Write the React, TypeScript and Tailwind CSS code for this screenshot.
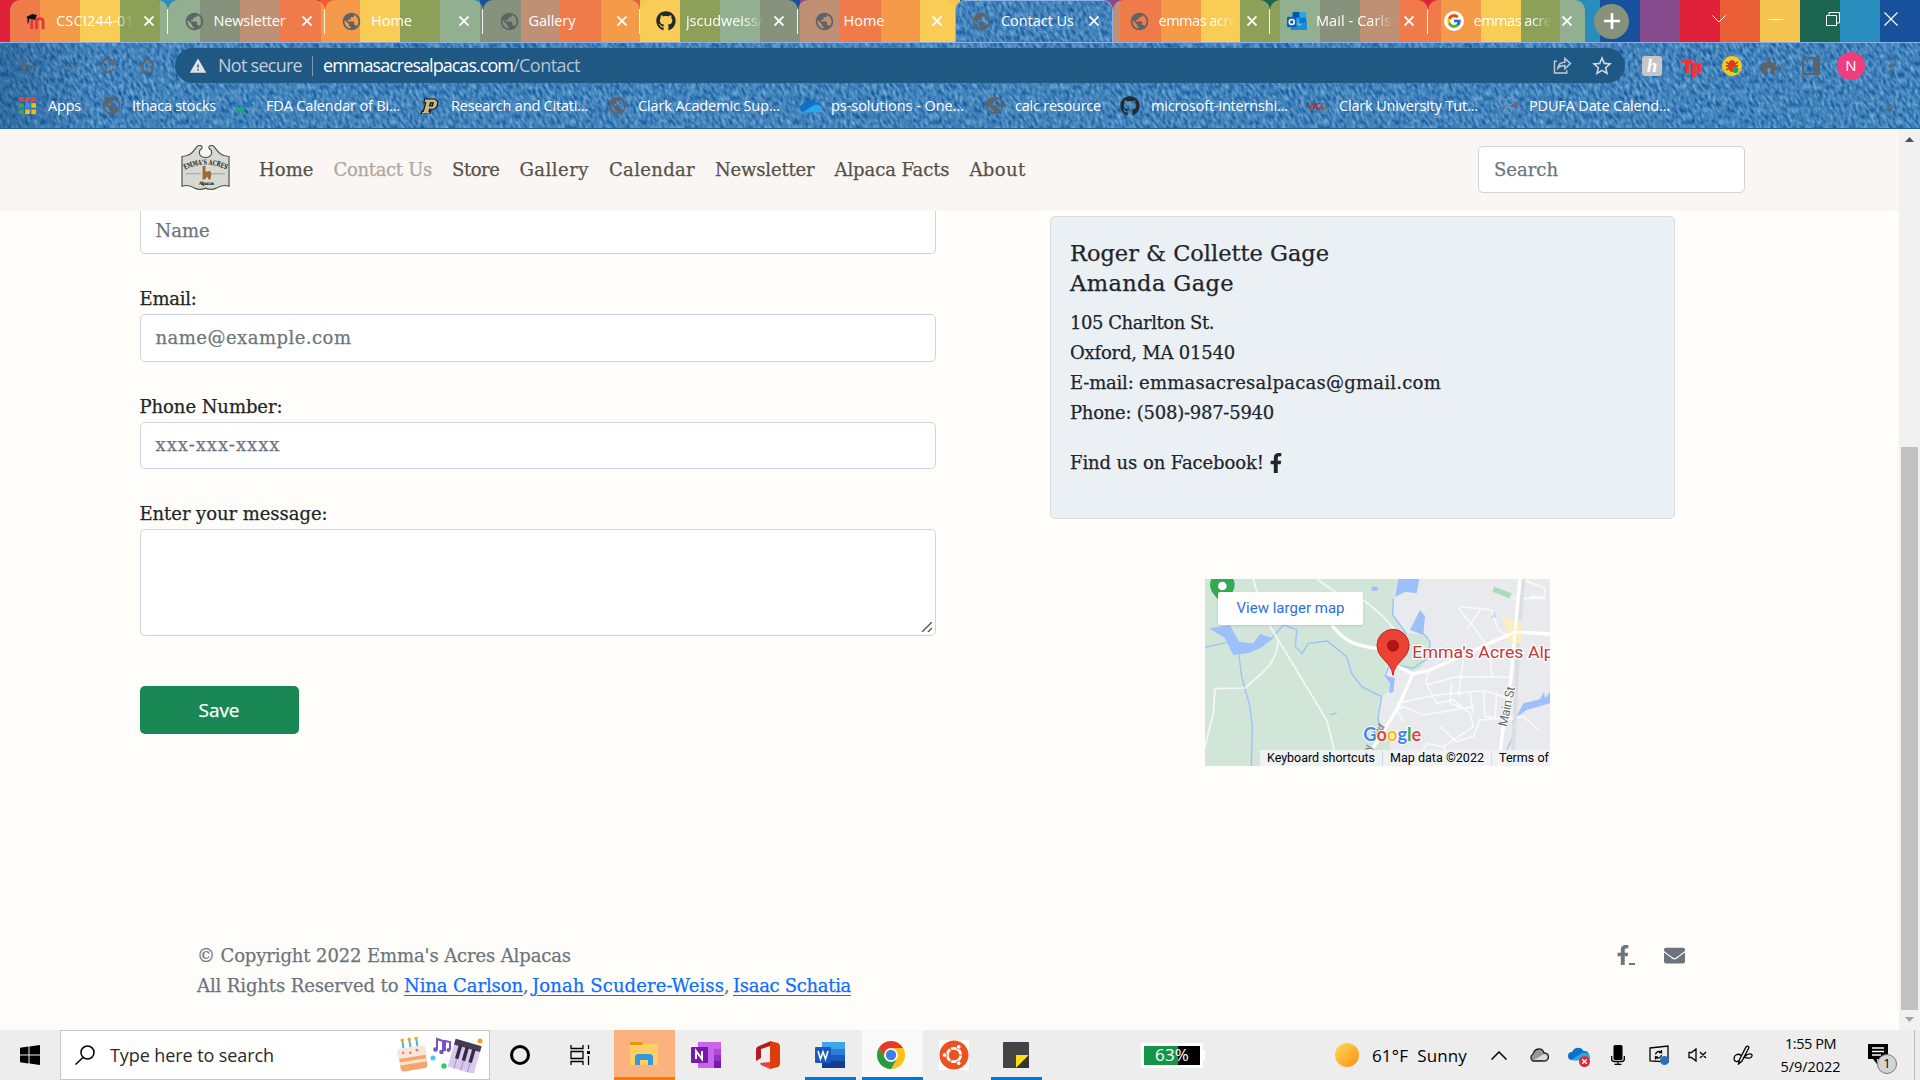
import { useLayoutEffect, useRef, useState, type ReactNode } from "react";
import { FaFacebookF, FaEnvelope, FaGithub, FaPuzzlePiece, FaUbuntu } from "react-icons/fa";
import { MdPublic, MdWarning, MdStarOutline } from "react-icons/md";
import { FcGoogle } from "react-icons/fc";

/* Text whose tracking is adjusted so that it spans the given width. */
function Fit({ w, children, className = "" }: { w: number; children: string; className?: string }) {
  const ref = useRef<HTMLSpanElement>(null);
  const [ls, setLs] = useState(0);
  useLayoutEffect(() => {
    const el = ref.current;
    if (el) setLs((w - el.getBoundingClientRect().width) / children.length);
  }, [w, children]);
  return (
    <span ref={ref} className={`inline-block whitespace-pre ${className}`} style={{ letterSpacing: `${ls}px` }}>
      {children}
    </span>
  );
}

const Globe = () => <MdPublic className="size-[21px] text-[#5f6368]" />;

const Outlook = () => (
  <svg viewBox="0 0 22 22" className="size-[21px]">
    <rect x="7" y="1" width="14" height="12" fill="#28a8ea" />
    <rect x="7" y="1" width="7" height="6" fill="#0358a7" />
    <rect x="14" y="7" width="7" height="6" fill="#0078d4" />
    <path d="M5 10l9 6 8-6v10H5z" fill="#1490df" />
    <rect x="1" y="6" width="10" height="11" rx="1" fill="#0f5fb3" />
    <circle cx="6" cy="11.5" r="2.6" fill="none" stroke="#fff" strokeWidth="1.6" />
  </svg>
);

const Moodle = () => (
  <svg viewBox="0 0 20 18" className="h-[17px] w-5">
    <path d="M4 17V9c0-4 5-4 5 0v8M9 17V9c0-4 7-4 7 0v8" transform="translate(1.5 0)" fill="none" stroke="#e5343d" strokeWidth="3" />
    <path d="M0 4L6 1l5 1-2 5-6-1-1 5H1V6z" fill="#111" />
  </svg>
);

type TabData = { title: string; w: number; icon: ReactNode; active?: boolean; fade?: boolean; sep?: boolean };
const tabs: TabData[] = [
  { title: "CSCI244-01", w: 78, icon: <Moodle />, fade: true, sep: true },
  { title: "Newsletter", w: 72, icon: <Globe />, sep: true },
  { title: "Home", w: 41, icon: <Globe />, sep: true },
  { title: "Gallery", w: 47, icon: <Globe />, sep: true },
  { title: "jscudweiss/", w: 77, icon: <FaGithub className="size-[20px] text-[#24292e]" />, fade: true, sep: true },
  { title: "Home", w: 41, icon: <Globe /> },
  { title: "Contact Us", w: 73, icon: <Globe />, active: true },
  { title: "emmas acre", w: 78, icon: <Globe />, fade: true, sep: true },
  { title: "Mail - Carlso", w: 84, icon: <Outlook />, fade: true, sep: true },
  { title: "emmas acre", w: 78, icon: <span className="flex size-5 items-center justify-center rounded-full bg-white"><FcGoogle className="size-4" /></span>, fade: true },
];

const frameStripes =
  "bg-fixed bg-[repeating-linear-gradient(90deg,#df2239_0_40px,#ea5e35_40px_80px,#f5c451_80px_120px,#1c6650_120px_160px,#288cbc_160px_200px,#17509b_200px_240px,#864b8c_240px_280px)]";
const tabStripes =
  "bg-fixed bg-[repeating-linear-gradient(90deg,#ef7b4b_0_40px,#f49a49_40px_80px,#f8cc55_80px_120px,#8ca058_120px_160px,#92af8f_160px_200px,#87927c_200px_240px,#bf9073_240px_280px)]";

function Denim({ id, className }: { id: string; className: string }) {
  return (
    <svg className={className} preserveAspectRatio="none">
      <filter id={id} x="0" y="0" width="100%" height="100%" colorInterpolationFilters="sRGB">
        <feTurbulence type="fractalNoise" baseFrequency="0.34 0.17" numOctaves="2" seed="7" />
        <feColorMatrix values="0.62 0 0 0 -0.05  0.56 0 0 0 0.23  0.38 0 0 0 0.54  0 0 0 0 1" />
      </filter>
      <g transform="skewX(18)">
        <rect x="-60" width="2100" height="140" filter={`url(#${id})`} />
      </g>
    </svg>
  );
}

const X = () => (
  <svg viewBox="0 0 10 10" className="size-[10px]" stroke="#fff" strokeWidth="1.9"><path d="M.5.5l9 9M9.5.5l-9 9" /></svg>
);

function Tab({ t }: { t: TabData }) {
  return (
    <div className={`relative flex h-[42px] w-[157.5px] shrink-0 items-center overflow-hidden rounded-t-[10px] ${t.active ? "border-x border-t border-[#8fb0e6] bg-[#3c7fbc] pb-px pl-[15px]" : `pl-4 ${tabStripes}`}`}>
      {t.active && <Denim id="denim-tab" className="absolute inset-0 h-full w-full" />}
      <span className="relative flex w-[30px] items-center">{t.icon}</span>
      <span className={`relative w-[83px] overflow-hidden text-[14.5px] leading-[20px] text-white ${t.fade ? "[mask-image:linear-gradient(90deg,#000_58px,transparent_78px)]" : ""}`}>
        <Fit w={t.w}>{t.title}</Fit>
      </span>
      <span className="relative ml-[5px]"><X /></span>
      {t.sep && <span className="absolute right-0 top-[9px] h-[25px] w-px bg-white/90" />}
    </div>
  );
}

function TabStrip() {
  return (
    <div className={`flex h-[42px] items-center pl-[10px] ${frameStripes}`}>
      {tabs.map((t, i) => <Tab key={i} t={t} />)}
      <div className="ml-[9px] flex size-[35px] items-center justify-center rounded-full bg-[#87927c]">
        <svg viewBox="0 0 16 16" className="size-4" stroke="#fff" strokeWidth="2.6"><path d="M8 0v16M0 8h16" /></svg>
      </div>
      <div className="ml-auto mb-1 flex items-center pr-[22px] text-white">
        <svg viewBox="0 0 14 8" className="h-2 w-[14px]" fill="none" stroke="currentColor"><path d="M.5.5L7 7 13.5.5" /></svg>
        <span className="ml-[43px] h-px w-[14px] bg-white" />
        <svg viewBox="0 0 14 14" className="ml-[43px] size-[14px]" fill="none" stroke="currentColor"><path d="M.5 3.5h10v10H.5zM3 3.500V.5h10.500v10.500H11" /></svg>
        <svg viewBox="0 0 14 14" className="ml-[44px] size-[14px]" fill="none" stroke="currentColor" strokeWidth="1.2"><path d="M.5.5l13 13M13.500.5l-13 13" /></svg>
      </div>
    </div>
  );
}

function Toolbar() {
  return (
    <div className="flex h-[45px] items-center text-[#5f6368]">
      <svg viewBox="0 0 20 16" className="ml-[19px] h-4 w-[18px]" fill="none" stroke="currentColor" strokeWidth="2"><path d="M19 8H2M9 1L2 8l7 7" /></svg>
      <svg viewBox="0 0 20 16" className="ml-[22px] h-4 w-[18px] opacity-40" fill="none" stroke="currentColor" strokeWidth="2"><path d="M1 8h17M11 1l7 7-7 7" /></svg>
      <svg viewBox="0 0 18 18" className="ml-[22px] size-[17px]" fill="none" stroke="currentColor" strokeWidth="2"><path d="M15.500 12A7 7 0 1 1 15 5M16.500 1v6h-6" /></svg>
      <svg viewBox="0 0 16 18" className="ml-[23px] h-[17px] w-[17px]" fill="none" stroke="currentColor" strokeWidth="2"><path d="M1 9l7-7.500L15 9M3 8v8.500h10V8" /></svg>
      <div className="ml-[19px] flex h-[35px] w-[1450px] items-center rounded-full bg-[#205884] pl-[14px] text-[18px]">
        <MdWarning className="size-[18px] text-[#dfe3e8]" />
        <span className="ml-[11px] text-[#c3cdd8]"><Fit w={84}>Not secure</Fit></span>
        <span className="mx-[10px] h-5 w-px bg-[#8499ad]" />
        <span className="text-white"><Fit w={190}>emmasacresalpacas.com</Fit></span>
        <span className="text-[#b5c4d3]"><Fit w={67}>/Contact</Fit></span>
        <svg viewBox="0 0 20 18" className="ml-auto h-[17px] w-[19px]" fill="none" stroke="#c3cdd8" strokeWidth="1.500"><path d="M4 4.500H1.500v12.500h13V14M5 12c.5-4 3-6.500 7.500-6.500V1.500L18.500 7l-6 5.500V9C9 9 7 9.500 5 12z" /></svg>
        <MdStarOutline className="ml-[18px] mr-[11px] size-[24px] text-[#d0d8e0]" />
      </div>
      <span className="ml-[17px] flex size-[20px] items-center justify-center rounded-[3px] bg-[#c4c6c8] font-['Liberation_Serif',serif] text-[19px] font-bold italic leading-none text-white">h</span>
      <span className="ml-[20px] w-[22px] text-[18px] font-extrabold leading-5 tracking-[-2px] text-[#ee3338] [-webkit-text-stroke:1px_#ee3338]">Tp</span>
      <svg viewBox="0 0 20 20" className="ml-[18px] size-[20px]"><circle cx="10" cy="10" r="10" fill="#fbc81c" /><path d="M4 6l12 8M16 6L4 14M4 10h12" stroke="#8a3a13" strokeWidth="1.300" /><ellipse cx="10" cy="10" rx="4" ry="6" fill="#db3b26" /><circle cx="13.500" cy="14" r="3" fill="#12a87a" /></svg>
      <FaPuzzlePiece className="ml-[20px] size-[19px]" />
      <svg viewBox="0 0 18 18" className="ml-[21px] size-[18px]"><path d="M1 1h16v16H1z" fill="none" stroke="currentColor" strokeWidth="2" /><path d="M11 1h6v16h-6z" fill="currentColor" /></svg>
      <span className="ml-[17px] flex size-[28px] items-center justify-center rounded-full bg-[#ee3e7b] text-[15px] text-white">N</span>
      <svg viewBox="0 0 4 18" className="ml-[24px] h-[17px] w-1" fill="currentColor"><circle cx="2" cy="2" r="2" /><circle cx="2" cy="9" r="2" /><circle cx="2" cy="16" r="2" /></svg>
    </div>
  );
}

const OneDrive = () => (
  <svg viewBox="0 0 22 14" className="h-[14px] w-[22px]"><path d="M4 13a4 4 0 0 1 0-8C6 0 13-1 15.500 4a4.500 4.500 0 0 1 2 9z" fill="#0f6fc9" /><path d="M3 13L14 6c4-1 8 1 8 4s-2 3.500-4 3.500H5z" fill="#28a8ea" /></svg>
);
const dotColors = ["fill-[#ea4335]", "fill-[#ea4335]", "fill-[#ea4335]", "fill-[#34a853]", "fill-[#4285f4]", "fill-[#fbbc04]", "fill-[#34a853]", "fill-[#fbbc04]", "fill-[#fbbc04]"];
const bookmarks: { t: string; w: number; icon: ReactNode; slot: string }[] = [
  { t: "Apps", w: 33, slot: "w-[82px]", icon: <svg viewBox="0 0 17 17" className="size-[17px]">{dotColors.map((c, i) => <rect key={i} x={(i % 3) * 6.200} y={Math.floor(i / 3) * 6.200} width="4.600" height="4.600" className={c} />)}</svg> },
  { t: "Ithaca stocks", w: 84, slot: "w-[134px]", icon: <Globe /> },
  { t: "FDA Calendar of Bi...", w: 134, slot: "w-[185px]", icon: <svg viewBox="0 0 20 20" className="size-5" fill="none" strokeWidth="3"><path d="M1 16c4-6 6-1 9-6" stroke="#19a974" /><path d="M8 11c2-5 6-2 10-8" stroke="#2376c4" /><path d="M6 14l3 3" stroke="#19a974" /></svg> },
  { t: "Research and Citati...", w: 137, slot: "w-[187px]", icon: <svg viewBox="0 0 20 17" className="h-4 w-[19px]"><path d="M5 1h11l3 3-1 5-3 3H10l-.5 2H11l-1 3H1l1-3h1.500L6 5H4zM11 5l-.8 3.500h3L14 5z" fill="#cfb87c" fillRule="evenodd" stroke="#111" strokeWidth="1.200" /></svg> },
  { t: "Clark Academic Sup...", w: 142, slot: "w-[193px]", icon: <Globe /> },
  { t: "ps-solutions - One...", w: 133, slot: "w-[184px]", icon: <OneDrive /> },
  { t: "calc resource", w: 86, slot: "w-[136px]", icon: <Globe /> },
  { t: "microsoft-internshi...", w: 137, slot: "w-[188px]", icon: <FaGithub className="size-5 text-[#24292e]" /> },
  { t: "Clark University Tut...", w: 139, slot: "w-[190px]", icon: <span className="text-[9px] font-bold tracking-[-1px] text-[#c22434]">WC<span className="text-[#666]">O</span></span> },
  { t: "PDUFA Date Calend...", w: 141, slot: "w-[190px]", icon: <svg viewBox="0 0 20 20" className="size-5" fill="none" stroke="#7197c4" strokeWidth="1.300"><circle cx="5" cy="6" r="3.500" /><circle cx="12" cy="5" r="3.500" /><circle cx="10" cy="14" r="3.500" /><circle cx="17" cy="9" r="1.200" stroke="#c44" /></svg> },
];

function Bookmarks() {
  return (
    <div className="flex h-[40px] items-center pl-[19px] pb-[5px] text-[14.5px] leading-5 text-white">
      {bookmarks.map((b) => (
        <div key={b.t} className={`flex shrink-0 items-center ${b.slot}`}>
          <span className={`flex shrink-0 items-center ${b.t === "Apps" ? "w-[29px]" : "w-[31px]"}`}>{b.icon}</span>
          <Fit w={b.w}>{b.t}</Fit>
        </div>
      ))}
      <span className="ml-auto mr-[26px] text-[17px] text-[#5f6368]">»</span>
    </div>
  );
}

function Logo() {
  return (
    <svg viewBox="0 0 50 48" className="-mt-[3px] h-[46px] w-[49px]" preserveAspectRatio="none">
      <path d="M1 12c9 0 12-6 15-10 3-3 7-1 5 2-3 1-4 9 4 9s7-8 4-9c-2-3 2-5 5-2 3 4 6 10 15 10v31c-6-2-10 0-13 2-4 2-7 2-11 0-4 2-7 2-11 0-3-2-7-4-13-2z" fill="#d8d9d0" stroke="#4c554c" strokeWidth="1.200" />
      <path id="logo-arc" d="M4 26Q25 15 47 26" fill="none" />
      <text fontSize="7.500" fontWeight="700" fontFamily="DejaVu Serif, serif" fill="#222"><textPath href="#logo-arc" textLength="44" lengthAdjust="spacingAndGlyphs">EMMA'S ACRES</textPath></text>
      <path d="M5 30h15M31 30h14" stroke="#8b908b" strokeWidth=".8" />
      <path d="M22 22h3v6l5-1 1 4-1 5h-2l-1-3-3 3h-2v-7z" fill="#9b6b35" />
      <text x="18" y="42" fontSize="5" fontWeight="700" textLength="16" fontFamily="DejaVu Serif, serif" fill="#222">Alpacas</text>
    </svg>
  );
}

const nav: [string, number][] = [["Home", 54.5], ["Contact Us", 98.5], ["Store", 47.5], ["Gallery", 69.5], ["Calendar", 86], ["Newsletter", 99.5], ["Alpaca Facts", 115], ["About", 56]];

function NavBar() {
  return (
    <nav className="flex h-[82px] shrink-0 items-center bg-[#faf6f4] pb-px pl-[181px] text-[18px]">
      <Logo />
      <div className="ml-[29px] flex gap-5">
        {nav.map(([t, w]) => (
          <a key={t} className={t === "Contact Us" ? "text-[#aea69c]" : "text-[#565049]"}><Fit w={w}>{t}</Fit></a>
        ))}
      </div>
      <div className="ml-auto mr-[154px] flex h-[47px] w-[267px] items-center rounded-[5px] border border-[#ced4da] bg-white pl-[15px] text-[#6c757d]"><Fit w={64}>Search</Fit></div>
    </nav>
  );
}

function Field({ label, lw, ph, pw }: { label: string; lw: number; ph: string; pw: number }) {
  return (
    <div className="mt-[30px]">
      <div className="flex h-[30px] items-center leading-[30px]"><Fit w={lw}>{label}</Fit></div>
      <div className="flex h-[47.500px] items-center rounded-[5px] border border-[#ced4da] bg-white pb-px pl-[15px] text-[#6c757d]"><Fit w={pw}>{ph}</Fit></div>
    </div>
  );
}

function ContactForm() {
  return (
    <form className="w-[796px] text-[18px] text-[#212529]">
      <div className="flex h-[43px] items-center rounded-b-[5px] border border-t-0 border-[#ced4da] bg-white pb-[4px] pl-[15px] text-[#6c757d]"><Fit w={54}>Name</Fit></div>
      <Field label="Email:" lw={57} ph="name@example.com" pw={196} />
      <Field label="Phone Number:" lw={143} ph="xxx-xxx-xxxx" pw={125} />
      <div className="mt-[30px] flex h-[30px] items-center leading-[30px]"><Fit w={188}>Enter your message:</Fit></div>
      <div className="flex h-[107px] items-end justify-end rounded-[5px] border border-[#ced4da] bg-white p-[3px]">
        <svg viewBox="0 0 10 10" className="size-[10px]" stroke="#555" strokeWidth="1.400"><path d="M0 10L10 0M6 10l4-4" /></svg>
      </div>
      <button type="button" className="mt-[50px] flex h-[48px] w-[159px] items-center justify-center rounded-[5px] bg-[#198754] font-['Open_Sans',sans-serif] text-[19px] text-white"><Fit w={41}>Save</Fit></button>
    </form>
  );
}

function ContactCard() {
  return (
    <section className="h-[303px] w-[625px] rounded-[5px] border border-[#d9dde0] bg-[#ebf0f5] px-[19px] pt-[21px] text-[18px] leading-[30px] text-[#212529]">
      <h5 className="text-[22.5px] leading-[30px]"><Fit w={259}>Roger & Collette Gage</Fit><br /><Fit w={164}>Amanda Gage</Fit></h5>
      <p className="mt-[10px]">
        <Fit w={144}>105 Charlton St.</Fit><br />
        <Fit w={165}>Oxford, MA 01540</Fit><br />
        <Fit w={69}>E-mail: </Fit><Fit w={302}>emmasacresalpacas@gmail.com</Fit><br />
        <Fit w={204}>Phone: (508)-987-5940</Fit>
      </p>
      <p className="mt-5 flex items-center"><Fit w={194}>Find us on Facebook!</Fit><FaFacebookF className="ml-[2px] size-[20px]" /></p>
    </section>
  );
}

function MapEmbed() {
  return (
    <div className="relative mt-[60px] ml-[155px] h-[187px] w-[345px] overflow-hidden bg-[#e8eaed] font-[Roboto,sans-serif] [-webkit-text-stroke:0]">
      <svg viewBox="45 57 1035 561" className="h-full w-full" fill="none">
        <path d="M45 57H625L607 130 612 175 648 220 715 225 720 290 690 325 660 335 640 330 590 315 588 345 605 385 570 415 565 470 600 545 600 618H45z" fill="#d1e6d9" />
        <g fill="#9dc0fb">
          <path d="M58 205L120 196 147 245 190 250 210 222 250 235 215 262 180 278 130 286 105 235z" />
          <path d="M615 112L625 57H688L680 100 645 95zM660 210L690 150 705 168 700 225zM545 80h18v12h-18zM905 172L912 155 918 173zM582 345L615 355 610 395 598 400 600 370zM978 472L1000 430 1050 418 1062 395 1065 415 1080 395V430L1010 450z" />
        </g>
        <g stroke="#9dc0fb" strokeWidth="4">
          <path d="M45 262L125 244M147 285L155 350 180 440 187 500 184 618M245 235L280 195 320 210 316 260 336 280 355 250 412 243 470 290 485 340 515 380 575 410M610 115L608 165 650 222M700 220L720 245 718 290 670 325 600 310 585 350M575 410L563 480 600 545M968 480L975 520 950 570 955 618M420 464l20-5" />
        </g>
        <g stroke="#fff" strokeWidth="5" opacity=".75">
          <path d="M190 57L205 110 235 190 265 240 410 480 445 618M380 57L470 120 525 123 575 165 620 215M265 240C260 320 200 350 165 384L75 386 70 460 45 560" />
          <path d="M715 330L708 370 740 430 790 420 840 460 850 500M708 375L800 350 960 352M620 430L740 405 880 392 960 415M640 485L620 450 640 440 700 465 850 440M880 390L885 470 980 480M785 370L780 430 830 450M920 395L915 480M750 500L800 545 850 530 870 480 1000 470 1045 510M690 590L710 550 760 560 800 618M805 145L850 200 900 270 905 350M810 140L905 150 925 210 960 235M830 210L870 150M850 500L760 560 770 590M820 300L805 410M840 395L850 460M1000 60L1065 85 1062 112 1020 110M970 115H1065" />
        </g>
        <path d="M1000 57L985 225 975 470 965 618" stroke="#dcdee2" strokeWidth="12" />
        <g stroke="#fff" strokeWidth="10">
          <path d="M425 195C465 245 490 255 560 265L625 320 668 342 720 330 975 216 1080 222M668 342L625 440 540 580 520 618" />
          <path d="M990 57L975 216 962 360 940 500 925 618" />
        </g>
        <path d="M935 170L995 185V250L950 252 955 220z" fill="#fceebf" />
        <path d="M990 57L975 216 962 360M900 248L975 216 1080 222" stroke="#fff" strokeWidth="8" />
        <path d="M912 80L965 100 958 115 908 95z" fill="#a9dbb8" />
        <path d="M97 137c-8-22-37-35-37-63 0-20 17-35 37-35s37 15 37 35c0 28-29 41-37 63z" fill="#34a853" />
        <circle cx="97" cy="78" r="13" fill="#fff" />
        <text transform="translate(950 502) rotate(-78)" fontSize="38" fill="#666b70" stroke="#fff" strokeWidth="5" paintOrder="stroke" textLength="122">Main St</text>
        <text transform="translate(536 606) rotate(-78)" fontSize="34" fill="#777">lley</text>
        <text transform="translate(566 530) rotate(-58)" fontSize="30" fill="#777">Rd</text>
        <path d="M609 346c-5-42-48-50-48-90a48 48 0 0 1 96 0c0 40-43 48-48 90z" fill="#ea4335" stroke="#c5221f" strokeWidth="3" />
        <circle cx="609" cy="257" r="18" fill="#b31412" />
        <text x="667" y="294" fontSize="47" fill="#c5373a" stroke="#fff" strokeWidth="7" paintOrder="stroke" textLength="424" lengthAdjust="spacingAndGlyphs">Emma's Acres Alp</text>
        <text x="520" y="542" fontSize="58" fontWeight="700" fontFamily="Lato, sans-serif" stroke="#fff" strokeWidth="5" paintOrder="stroke" textLength="174" lengthAdjust="spacingAndGlyphs">
          <tspan fill="#4285f4">G</tspan><tspan fill="#ea4335">o</tspan><tspan fill="#fbbc04">o</tspan><tspan fill="#4285f4">g</tspan><tspan fill="#34a853">l</tspan><tspan fill="#ea4335">e</tspan>
        </text>
      </svg>
      <div className="absolute left-[13px] top-[13px] flex h-[33px] w-[145px] items-center justify-center rounded-[2px] bg-white text-[15px] text-[#2a6fe0] shadow"><Fit w={108}>View larger map</Fit></div>
      <div className="absolute bottom-0 right-0 flex h-4 w-[290px] items-center bg-[#f1f3f4]/90 pl-[7px] pt-px text-[12.500px] text-black">
        <Fit w={108}>Keyboard shortcuts</Fit><span className="mx-[7px] h-4 w-px bg-[#d5d8da]" /><Fit w={94}>Map data ©2022</Fit><span className="mx-[7px] h-4 w-px bg-[#dcdfe1]" /><Fit w={50}>Terms of</Fit>
      </div>
    </div>
  );
}

function Footer() {
  const link = "text-[#0d6efd] underline underline-offset-[3px]";
  return (
    <footer className="mt-[175px] flex justify-between pl-[197px] pr-[214px] text-[18px] leading-[30px] text-[#6c757d]">
      <div>
        <Fit w={374}>© Copyright 2022 Emma's Acres Alpacas</Fit><br />
        <Fit w={207}>All Rights Reserved to </Fit><Fit w={119} className={link}>Nina Carlson</Fit><Fit w={9}>, </Fit><Fit w={192} className={link}>Jonah Scudere-Weiss</Fit><Fit w={9}>, </Fit><Fit w={118} className={link}>Isaac Schatia</Fit>
      </div>
      <div className="flex h-[28px] items-center">
        <FaFacebookF className="size-5" /><span className="-ml-1 mt-[18px] h-[2px] w-[6px] bg-[#6c757d]" />
        <FaEnvelope className="ml-[29px] size-[21px]" />
      </div>
    </footer>
  );
}

function Cell({ w, children, className = "" }: { w: string; children?: ReactNode; className?: string }) {
  return <div className={`relative flex h-[50px] shrink-0 items-center justify-center ${w} ${className}`}>{children}</div>;
}

function Taskbar() {
  return (
    <div className="flex h-[50px] items-center bg-[#ededed] text-black">
      <Cell w="w-[60px]"><svg viewBox="0 0 20 20" className="size-5"><path d="M0 2.800L8.500 1.600V9.500H0zM9.500 1.500L20 0v9.500H9.500zM0 10.500h8.500v7.900L0 17.200zM9.500 10.500H20V20L9.500 18.500z" /></svg></Cell>
      <div className="flex h-[50px] w-[430px] items-center border border-[#c6c6c6] bg-white pl-[14px] text-[18px]">
        <svg viewBox="0 0 20 20" className="size-5" fill="none" stroke="#000" strokeWidth="1.500"><circle cx="12.500" cy="7.500" r="6.500" /><path d="M8 12.500L.5 19.500" /></svg>
        <span className="ml-[15px] text-[#2a2a2a]"><Fit w={164}>Type here to search</Fit></span>
        <svg viewBox="0 0 86 36" className="ml-auto mr-[6px] h-9 w-[86px]">
          <g transform="rotate(-9 15 20)"><rect x="2" y="18" width="27" height="15" rx="3" fill="#f3a66f" /><path d="M2 25h27" stroke="#fbe3cf" strokeWidth="3" /><rect x="1" y="10" width="29" height="10" rx="4" fill="#fbe6d2" /><path d="M8 10V3M15 10V3M22 10V3" stroke="#46b8dd" strokeWidth="2" /><g fill="#f6a21a"><circle cx="8" cy="2" r="1.800" /><circle cx="15" cy="2" r="1.800" /><circle cx="22" cy="2" r="1.800" /></g><path d="M6 14l2 1M13 16l2-1M20 13l2 2" stroke="#d36bb4" strokeWidth="2" /></g>
          <path d="M40 12V2l6 2v10M48 14V4l5 1v8" fill="none" stroke="#7c50c7" strokeWidth="2" /><g fill="#7c50c7"><circle cx="38.500" cy="12.500" r="2.300" /><circle cx="44.500" cy="15" r="2.300" /><circle cx="51.500" cy="13" r="2" /></g>
          <circle cx="36" cy="21" r="2.500" fill="#51c4e6" /><circle cx="47" cy="29" r="2.700" fill="#3cc66d" /><circle cx="83" cy="4" r="2.500" fill="#f6a21a" />
          <g transform="rotate(16 68 20)"><rect x="54" y="5" width="27" height="29" rx="1" fill="#d9c9ec" /><rect x="54" y="5" width="27" height="6" fill="#463a57" /><path d="M60.500 10v14M67.500 10v14M74.500 10v14" stroke="#352c44" strokeWidth="3.500" /><path d="M60.500 24v10M67.500 24v10M74.500 24v10" stroke="#a692bf" /></g>
        </svg>
      </div>
      <Cell w="w-[60px]"><span className="size-[20px] rounded-full border-[3px] border-black" /></Cell>
      <Cell w="w-[64px]"><svg viewBox="0 0 20 20" className="mr-2 ml-[3px] size-5" fill="none" stroke="#000" strokeWidth="1.300"><path d="M1 0v3.500h12V0M1 20v-3.500h12V20M1 6.500h12v7H1zM18.500 0v4M18.500 11v9" /><path d="M17 6h3v3h-3z" fill="#000" stroke="none" /></svg></Cell>
      <Cell w="w-[61px]" className="border-b-[3px] border-[#ff7800] bg-[#fcb27e]"><svg viewBox="0 0 28 24" className="mr-[2px] h-6 w-7"><path d="M0 0h12l1 4H0z" fill="#e09b08" /><path d="M0 3h13l2-1h13v21H0z" fill="#fed063" /><path d="M5 23v-9l2-2h14l2 2v9h-5v-5h-8v5z" fill="#3797dc" /></svg></Cell>
      <Cell w="w-[62px]"><svg viewBox="0 0 30 26" className="h-[26px] w-[30px]"><path d="M7 0h23v26H7z" fill="#ca64ea" /><path d="M23 7h7v6h-7z" fill="#ae4bd5" /><path d="M23 13h7v6h-7z" fill="#9332bf" /><path d="M23 19h7v7h-7z" fill="#7719aa" /><rect y="5" width="17" height="16" rx="1" fill="#7719aa" /><path d="M5 17V9l6 8V9" fill="none" stroke="#fff" strokeWidth="2" /></svg></Cell>
      <Cell w="w-[62px]"><svg viewBox="0 0 24 28" className="h-7 w-6"><path d="M15 0L3 5Q0 6 0 9v11l5-3V8l9-3z" fill="#b51a1e" /><path d="M14 0l8 2q2 1 2 3v18q0 2-2 3l-8 2z" fill="#dc3e0b" /><path d="M4 22l10-1v7L5 24z" fill="#e9414b" /></svg></Cell>
      <Cell w="w-[60px]" className="ml-[1px]"><svg viewBox="0 0 30 26" className="h-[26px] w-[30px]"><path d="M7 0h23v7H7z" fill="#41a5ee" /><path d="M7 7h23v6H7z" fill="#2b7cd3" /><path d="M7 13h23v6H7z" fill="#185abd" /><path d="M7 19h23v7H7z" fill="#103f91" /><rect y="5" width="16" height="16" rx="1" fill="#185abd" /><path d="M3 9l2.500 8L8 10l2.500 7L13 9" fill="none" stroke="#fff" strokeWidth="1.600" /></svg><span className="absolute bottom-0 h-[3px] w-[51px] bg-[#0078d7]" /></Cell>
      <Cell w="w-[61px]" className="ml-[2px] border-b-[3px] border-[#0078d7] bg-[#f9f9f9]"><svg viewBox="0 0 28 28" className="mr-[3px] mt-[2px] size-7"><circle cx="14" cy="14" r="14" fill="#fbc116" /><path d="M1.900 7A14 14 0 0 1 26.100 7H14A7 7 0 0 0 7.900 17.500z" fill="#e33b2e" /><path d="M1.900 7A14 14 0 0 0 14 28l6-10.500A7 7 0 0 1 7.900 17.500z" fill="#259b48" /><circle cx="14" cy="14" r="6.800" fill="#fff" /><circle cx="14" cy="14" r="5.200" fill="#3f7de8" /></svg></Cell>
      <Cell w="w-[62px]"><span className="flex size-[30px] items-center justify-center bg-white"><FaUbuntu className="size-[30px] text-[#e95420]" /></span></Cell>
      <Cell w="w-[62px]"><svg viewBox="0 0 26 26" className="size-[26px]"><rect width="26" height="26" rx="1" fill="#444" /><path d="M13 26V13h13z" fill="#fcdc12" /><path d="M13 26l13-13v13z" fill="#333" /></svg><span className="absolute bottom-0 h-[3px] w-[51px] bg-[#0078d7]" /></Cell>
      <div className="ml-[94px] flex h-[25px] w-[62px] items-center justify-center border-[3px] border-white bg-[linear-gradient(90deg,#159447_61%,#000_61%)] text-[17px] text-white"><Fit w={34}>63%</Fit></div>
      <span className="h-[10px] w-[2px] bg-white" />
      <span className="ml-[130px] h-6 w-6 rounded-full bg-linear-to-br from-[#ffdc55] to-[#ff8c00]" />
      <span className="ml-[13px] flex pt-[2px] text-[17px]"><Fit w={95}>61°F  Sunny</Fit></span>
      <svg viewBox="0 0 16 9" className="ml-[24px] h-[9px] w-4" fill="none" stroke="#000" strokeWidth="1.500"><path d="M.5 8.500L8 1l7.500 7.500" /></svg>
      <svg viewBox="0 0 20 14" className="ml-[22px] h-[14px] w-5"><path d="M4 13a4 4 0 0 1 0-7C6 0 13-1 15 5a4 4 0 0 1 1 8z" fill="#999" stroke="#222" strokeWidth="1.300" /><path d="M5 12L15 6q4 1 3 4t-4 2z" fill="#ddd" /></svg>
      <span className="relative ml-[19px] h-4 w-[22px]"><OneDrive /><span className="absolute -bottom-1 right-0 flex size-[11px] items-center justify-center rounded-full bg-[#d92c37]"><svg viewBox="0 0 6 6" className="size-[5px]" stroke="#fff" strokeWidth="1.500"><path d="M0 0l6 6M6 0L0 6" /></svg></span></span>
      <svg viewBox="0 0 14 20" className="ml-[21px] h-5 w-[14px]"><rect x="2.500" width="9" height="15" rx="1.500" /><path d="M.7 11v3q0 2.500 2.500 2.500h7.600q2.500 0 2.500-2.500v-3M7 16v3M3.500 19.300h7" fill="none" stroke="#000" strokeWidth="1.300" /></svg>
      <svg viewBox="0 0 20 20" className="ml-[24px] size-5" fill="none" stroke="#000" strokeWidth="1.300"><path d="M1 3l18-2v16L1 16z" /><path d="M6.500 9.500a3.500 3.500 0 0 1 6-2V5M12.500 7.500H10M12.500 10a3.500 3.500 0 0 1-6 2v2.500M6.500 12H9" /><circle cx="15.500" cy="15.500" r="4.500" fill="#2a70b9" stroke="none" /></svg>
      <svg viewBox="0 0 20 14" className="ml-[19px] h-[14px] w-5" fill="none" stroke="#000" strokeWidth="1.300"><path d="M1 4.500h2.500L8 1v12L3.500 9.500H1zM12 4l6 6M18 4l-6 6" /></svg>
      <svg viewBox="0 0 20 20" className="ml-[25px] size-5" fill="none" stroke="#000" strokeWidth="1.300"><path d="M6.500 14.500L13 2q2-2 3 .5L9 16l-3.500 3zM8 10.500c-3-3-7 0-7 3s3 4 5 2M11.500 12c3-4 8-4 7.500-1s-5 2-8 1.500" /></svg>
      <div className="ml-[27px] flex w-[61px] flex-col items-center text-[14.500px] leading-[23px]"><Fit w={51}>1:55 PM</Fit><Fit w={60}>5/9/2022</Fit></div>
      <span className="relative ml-[27px] h-[30px] w-[31px]"><svg viewBox="0 0 20 20" className="mt-1 size-5"><path d="M0 0h20v15H9v5l-4-5H0z" /><path d="M4 4h12M4 7.500h12M4 11h9" stroke="#fff" strokeWidth="1.300" /></svg><span className="absolute left-[9px] top-[14px] flex size-[20px] items-center justify-center rounded-full border border-[#777] bg-[#d4d4d4] text-[13px]">1</span></span>
      <span className="ml-auto mr-[5px] h-[50px] w-px bg-[#bdbdbd]" />
    </div>
  );
}

export default function App() {
  return (
    <div className="flex h-[1080px] w-[1920px] flex-col overflow-hidden bg-[#fffdf9] font-['Open_Sans',sans-serif]">
      <header className="h-[129px] shrink-0">
        <TabStrip />
        <div className="relative h-[87px] overflow-hidden border-b border-t border-b-[#23639c] border-t-[#8fb0e6] bg-[#3c7fbc]">
          <Denim id="denim-bar" className="absolute inset-0 h-full w-full" />
          <div className="absolute inset-0 bg-linear-to-r from-[#0c3e6b]/35 to-transparent to-5%" />
          <div className="relative"><Toolbar /><Bookmarks /></div>
        </div>
      </header>
      <div className="flex h-[901px] shrink-0">
        <main className="flex w-[1899px] flex-col bg-[#fffdf9] font-['DejaVu_Serif',serif] [-webkit-text-stroke:0.25px_currentColor]">
          <NavBar />
          <div className="flex pl-[139.500px]">
            <ContactForm />
            <div className="ml-[114.500px] mt-[5px]">
              <ContactCard />
              <MapEmbed />
            </div>
          </div>
          <Footer />
        </main>
        <div className="flex w-[21px] flex-col items-center bg-[#f1f1f1] py-[8px]">
          <svg viewBox="0 0 9 5" className="h-[5px] w-[9px]" fill="#505050"><path d="M0 5L4.500 0 9 5z" /></svg>
          <div className="mt-auto h-[563px] w-[17px] bg-[#c1c1c1]" />
          <svg viewBox="0 0 9 5" className="mt-[7px] h-[5px] w-[9px]" fill="#a3a3a3"><path d="M0 0L4.500 5 9 0z" /></svg>
        </div>
      </div>
      <Taskbar />
    </div>
  );
}
